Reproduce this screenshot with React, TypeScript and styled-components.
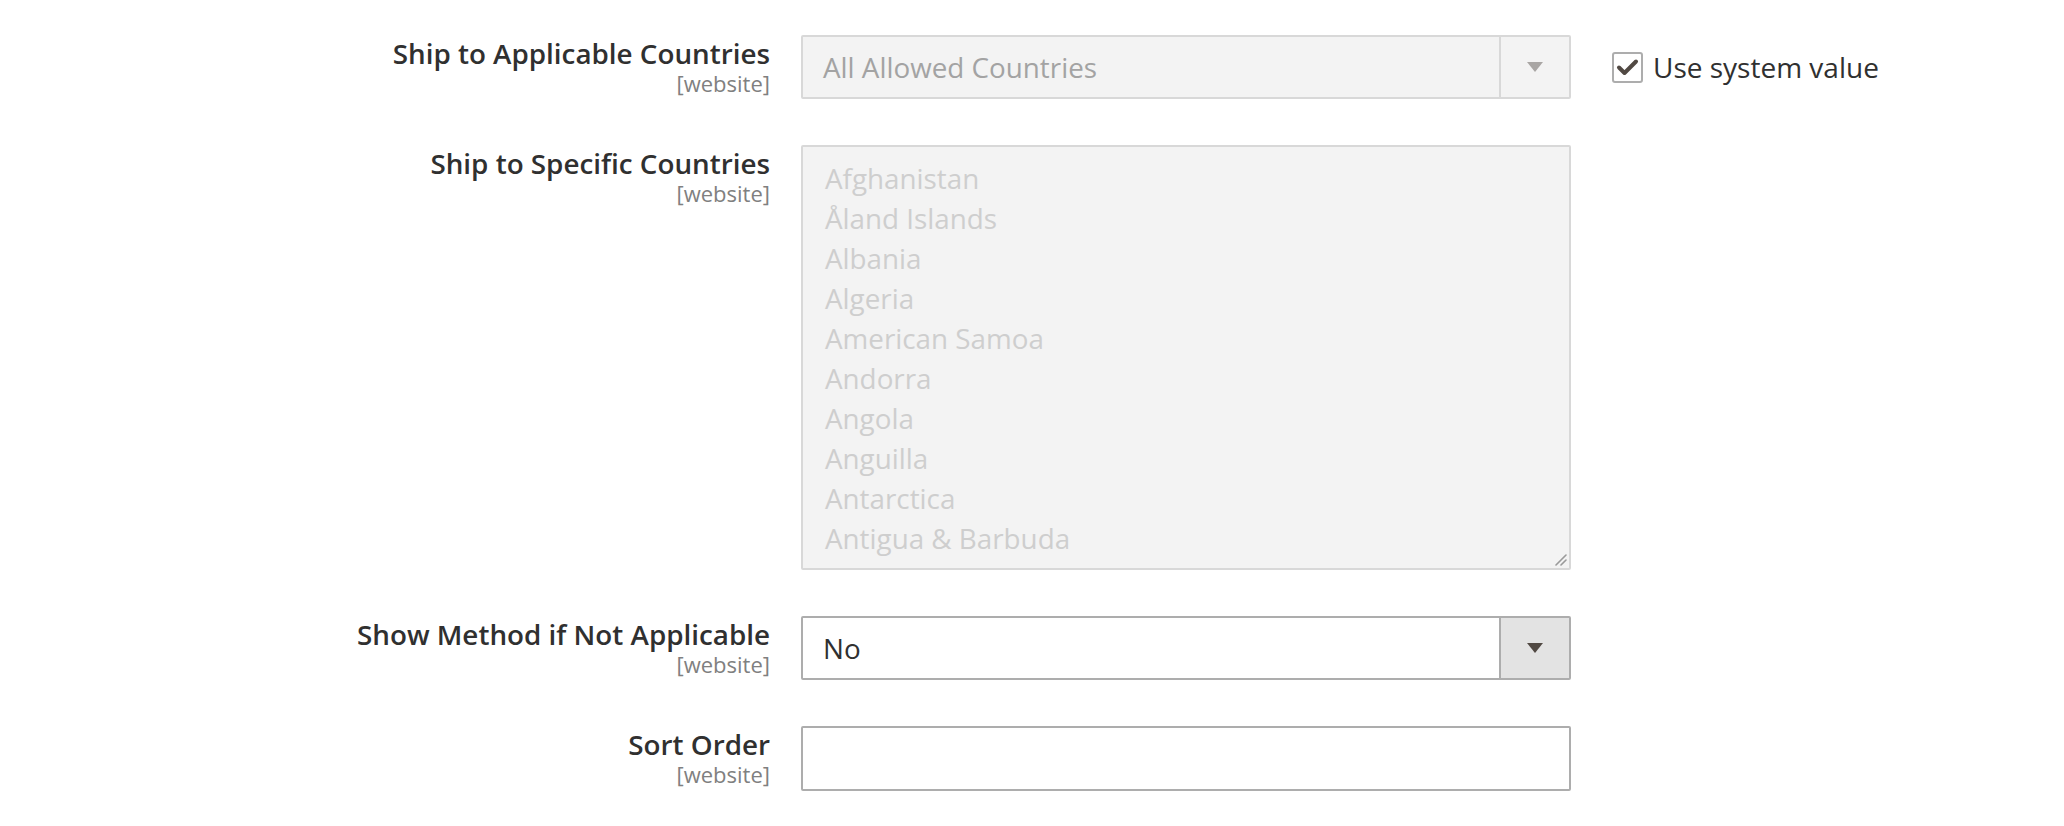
import styled, { createGlobalStyle } from 'styled-components';

const GlobalStyle = createGlobalStyle`
  html, body {
    margin: 0;
    padding: 0;
    background: #fff;
  }
  body {
    font-family: 'Open Sans', 'Liberation Sans', sans-serif;
    color: #303030;
  }
`;

const countries = [
  'Afghanistan',
  'Åland Islands',
  'Albania',
  'Algeria',
  'American Samoa',
  'Andorra',
  'Angola',
  'Anguilla',
  'Antarctica',
  'Antigua & Barbuda',
];

function ArrowIcon({ color }: { color: string }) {
  return (
    <svg width="16" height="10" viewBox="0 0 16 10">
      <path d="M0 0 L16 0 L8 10 Z" fill={color} />
    </svg>
  );
}

function Field({
  title,
  children,
  aside,
}: {
  title: string;
  children: React.ReactNode;
  aside?: React.ReactNode;
}) {
  return (
    <Row>
      <Label>
        <LabelText>{title}</LabelText>
        <Scope>[website]</Scope>
      </Label>
      <Control>{children}</Control>
      <Aside>{aside}</Aside>
    </Row>
  );
}

export default function App() {
  return (
    <>
      <GlobalStyle />
      <Form>
        <Field
          title="Ship to Applicable Countries"
          aside={
            <CheckLabel>
              <CheckBox>
                <svg width="27" height="27" viewBox="0 0 27 27">
                  <path
                    d="M5 13.5 L10.5 19 L22 7.5"
                    fill="none"
                    stroke="#514943"
                    strokeWidth="4"
                    strokeLinecap="round"
                    strokeLinejoin="round"
                  />
                </svg>
              </CheckBox>
              Use system value
            </CheckLabel>
          }
        >
          <Select disabled>
            <SelectValue disabled>All Allowed Countries</SelectValue>
            <ArrowBox disabled>
              <ArrowIcon color="#a9a6a4" />
            </ArrowBox>
          </Select>
        </Field>

        <Field title="Ship to Specific Countries">
          <MultiSelect>
            {countries.map((c) => (
              <Option key={c}>{c}</Option>
            ))}
            <Grip>
              <svg width="14" height="14" viewBox="0 0 14 14">
                <path
                  d="M13 3 L3 13 M13 8 L8 13"
                  stroke="#9a9a9a"
                  strokeWidth="1.6"
                  strokeLinecap="round"
                />
              </svg>
            </Grip>
          </MultiSelect>
        </Field>

        <Field title="Show Method if Not Applicable">
          <Select>
            <SelectValue>No</SelectValue>
            <ArrowBox>
              <ArrowIcon color="#514943" />
            </ArrowBox>
          </Select>
        </Field>

        <Field title="Sort Order">
          <Input />
        </Field>
      </Form>
    </>
  );
}

const Form = styled.div`
  display: flex;
  flex-direction: column;
  gap: 46px;
  padding-top: 35px;
  padding-bottom: 36px;
`;

const Row = styled.div`
  display: flex;
  align-items: flex-start;
`;

const Label = styled.div`
  width: 770px;
  margin-right: 31px;
  text-align: right;
  display: flex;
  flex-direction: column;
  align-items: flex-end;
`;

const LabelText = styled.span`
  font-size: 27.8px;
  font-weight: 600;
  line-height: 36px;
  color: #303030;
`;

const Scope = styled.span`
  font-size: 22px;
  line-height: 24px;
  color: #808080;
`;

const Control = styled.div`
  width: 770px;
  flex: none;
`;

const Aside = styled.div`
  padding-left: 41px;
  padding-top: 13px;
`;

const Select = styled.div<{ disabled?: boolean }>`
  box-sizing: border-box;
  height: 64px;
  display: flex;
  align-items: stretch;
  border: 2px solid ${(p) => (p.disabled ? '#d8d8d8' : '#adadad')};
  border-radius: 2px;
  background: ${(p) => (p.disabled ? '#f3f3f3' : '#fff')};
`;

const SelectValue = styled.div<{ disabled?: boolean }>`
  flex: 1;
  display: flex;
  align-items: center;
  padding-left: 20px;
  font-size: 27.8px;
  color: ${(p) => (p.disabled ? '#a3a3a3' : '#303030')};
`;

const ArrowBox = styled.div<{ disabled?: boolean }>`
  width: 68px;
  display: flex;
  align-items: center;
  justify-content: center;
  border-left: 2px solid ${(p) => (p.disabled ? '#d8d8d8' : '#adadad')};
  background: ${(p) => (p.disabled ? '#f3f3f3' : '#e3e3e3')};
`;

const MultiSelect = styled.div`
  position: relative;
  box-sizing: border-box;
  height: 425px;
  border: 2px solid #d8d8d8;
  border-radius: 2px;
  background: #f3f3f3;
  padding: 11px 22px;
  overflow: hidden;
`;

const Option = styled.div`
  font-size: 27.8px;
  line-height: 40px;
  color: #cecece;
  white-space: nowrap;
`;

const Grip = styled.div`
  position: absolute;
  right: 2px;
  bottom: 2px;
  width: 14px;
  height: 14px;
  display: flex;
`;

const Input = styled.div`
  box-sizing: border-box;
  height: 65px;
  border: 2px solid #adadad;
  border-radius: 2px;
  background: #fff;
`;

const CheckLabel = styled.label`
  display: flex;
  align-items: center;
  gap: 10px;
  font-size: 28px;
  color: #303030;
  white-space: nowrap;
  cursor: pointer;
`;

const CheckBox = styled.span`
  box-sizing: border-box;
  width: 31px;
  height: 31px;
  border: 2px solid #adadad;
  border-radius: 3px;
  background: #fff;
  display: flex;
  align-items: center;
  justify-content: center;
`;
